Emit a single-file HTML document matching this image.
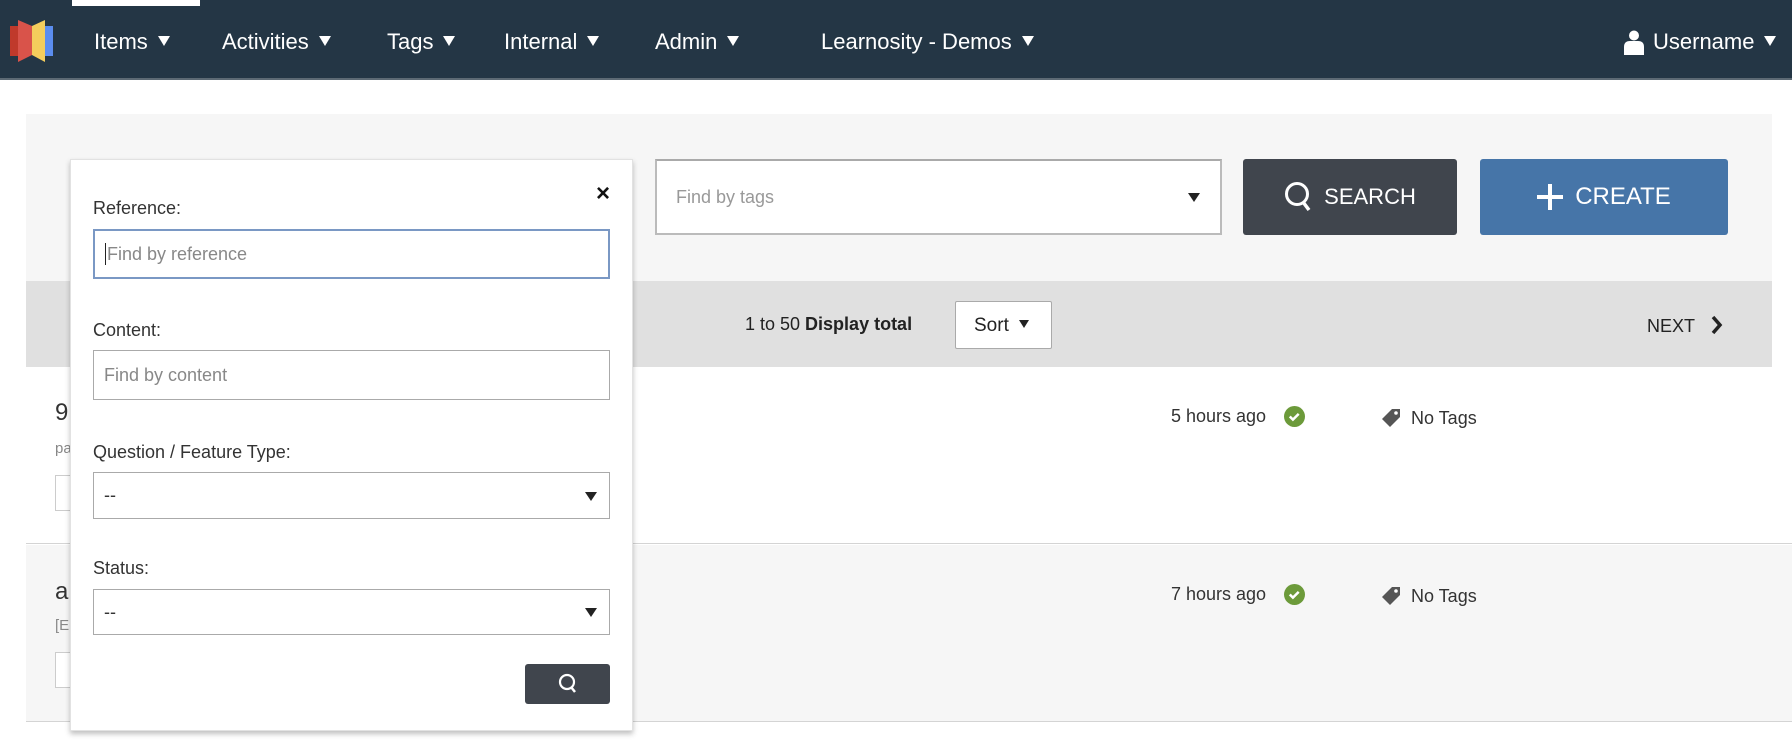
<!DOCTYPE html>
<html><head><meta charset="utf-8"><style>
*{box-sizing:border-box;margin:0;padding:0}
body{width:1792px;height:746px;position:relative;background:#fff;font-family:"Liberation Sans",sans-serif;overflow:hidden;color:#333}
.a{position:absolute}
.nav{left:0;top:0;width:1792px;height:80px;background:#243645;border-bottom:2px solid #5d6a74}
.ni{color:#fff;font-size:22px;top:29px;white-space:nowrap}
.tri{display:inline-block;width:0;height:0;border-left:6px solid transparent;border-right:6px solid transparent;border-top:10px solid currentColor;margin-left:10px;vertical-align:3px}
.lbl{font-size:18px;color:#333}
.inp{border:1px solid #aaa;background:#fff;font-size:18px;color:#888;padding-left:10px;display:flex;align-items:center}
.stri{position:absolute;right:12px;top:50%;margin-top:-4px;border-left:6px solid transparent;border-right:6px solid transparent;border-top:9px solid #222}
</style></head><body>
<div class="a nav"></div>
<div class="a" style="left:72px;top:0;width:128px;height:6px;background:#fff"></div>
<svg class="a" style="left:9px;top:19px" width="46" height="44" viewBox="0 0 46 44">
<rect x="1" y="7" width="9" height="30" fill="#c0392b"/>
<polygon points="9,1 23,7 23,36 9,43" fill="#d9534a"/>
<polygon points="23,7 36,1 36,43 23,36" fill="#f4cd5c"/>
<rect x="36" y="7" width="8" height="30" fill="#5b8def"/>
</svg>
<div class="a ni" style="left:94px">Items<span class="tri"></span></div>
<div class="a ni" style="left:222px">Activities<span class="tri"></span></div>
<div class="a ni" style="left:387px">Tags<span class="tri"></span></div>
<div class="a ni" style="left:504px">Internal<span class="tri"></span></div>
<div class="a ni" style="left:655px">Admin<span class="tri"></span></div>
<div class="a ni" style="left:821px">Learnosity - Demos<span class="tri"></span></div>
<svg class="a" style="left:1623px;top:30px" width="22" height="25" viewBox="0 0 22 25"><circle cx="11" cy="5.5" r="5" fill="#fff"/><path d="M1 25 V17 Q1 11 7 11 H15 Q21 11 21 17 V25Z" fill="#fff"/></svg>
<div class="a ni" style="left:1653px">Username<span class="tri"></span></div>

<div class="a" style="left:26px;top:114px;width:1746px;height:167px;background:#f6f6f6"></div>
<div class="a" style="left:26px;top:281px;width:1746px;height:86px;background:#e0e0e0"></div>
<div class="a" style="left:26px;top:367px;width:1766px;height:177px;background:#fff;border-bottom:1px solid #d4d4d4"></div>
<div class="a" style="left:26px;top:545px;width:1766px;height:177px;background:#f6f6f6;border-bottom:1px solid #d4d4d4"></div>

<div class="a inp" style="left:655px;top:159px;width:567px;height:76px;padding-left:19px;color:#999;border:2px solid #bbb;border-top-color:#aaa">Find by tags<span class="stri" style="right:20px"></span></div>
<div class="a" style="left:1243px;top:159px;width:214px;height:76px;background:#40454d;border-radius:3px;color:#fff;font-size:22px;display:flex;align-items:center;justify-content:center;gap:10px">
<svg width="30" height="32" viewBox="0 0 30 32"><circle cx="13" cy="13" r="10.5" fill="none" stroke="#fff" stroke-width="3"/><path d="M19 21 L25 29" stroke="#fff" stroke-width="3.5"/></svg>SEARCH</div>
<div class="a" style="left:1480px;top:159px;width:248px;height:76px;background:#4675a8;border-radius:3px;color:#fff;font-size:24px;display:flex;align-items:center;justify-content:center;gap:12px">
<svg width="26" height="26" viewBox="0 0 26 26"><path d="M13 0V26M0 13H26" stroke="#fff" stroke-width="4"/></svg>CREATE</div>

<div class="a" style="left:745px;top:314px;font-size:18px;color:#222">1 to 50 <b>Display total</b></div>
<div class="a" style="left:955px;top:301px;width:97px;height:48px;background:#fff;border:1px solid #aaa;border-radius:2px;font-size:19px;color:#222;padding:13px 0 0 18px">Sort<span class="tri" style="border-top-width:8px;border-left-width:5px;border-right-width:5px;vertical-align:3px"></span></div>
<div class="a" style="left:1647px;top:316px;font-size:18px;color:#222">NEXT</div>
<svg class="a" style="left:1711px;top:315px" width="12" height="20" viewBox="0 0 12 20"><path d="M2 2 L9 10 L2 18" fill="none" stroke="#222" stroke-width="3.5"/></svg>

<div class="a" style="left:55px;top:399px;font-size:24px;color:#333">9</div>
<div class="a" style="left:55px;top:440px;font-size:15px;color:#888">pa</div>
<div class="a" style="left:55px;top:475px;width:40px;height:36px;border:1px solid #ccc;background:#fff"></div>
<div class="a" style="left:55px;top:578px;font-size:24px;color:#333">a</div>
<div class="a" style="left:55px;top:617px;font-size:15px;color:#888">[E</div>
<div class="a" style="left:55px;top:652px;width:40px;height:36px;border:1px solid #ccc;background:#fff"></div>

<div class="a" style="left:1171px;top:406px;font-size:18px;color:#333">5 hours ago</div>
<svg class="a" style="left:1284px;top:406px" width="21" height="21" viewBox="0 0 20 20"><circle cx="10" cy="10" r="10" fill="#6c9a3a"/><path d="M5.5 10 L8.5 13 L14 7.5" fill="none" stroke="#fff" stroke-width="2.4"/></svg>
<svg class="a" style="left:1381px;top:408px" width="20" height="20" viewBox="0 0 20 20"><path d="M11 1 H19 V9 L9 19 L1 11Z" fill="#555"/><circle cx="15" cy="5" r="1.8" fill="#fff"/></svg>
<div class="a" style="left:1411px;top:408px;font-size:18px;color:#333">No Tags</div>
<div class="a" style="left:1171px;top:584px;font-size:18px;color:#333">7 hours ago</div>
<svg class="a" style="left:1284px;top:584px" width="21" height="21" viewBox="0 0 20 20"><circle cx="10" cy="10" r="10" fill="#6c9a3a"/><path d="M5.5 10 L8.5 13 L14 7.5" fill="none" stroke="#fff" stroke-width="2.4"/></svg>
<svg class="a" style="left:1381px;top:586px" width="20" height="20" viewBox="0 0 20 20"><path d="M11 1 H19 V9 L9 19 L1 11Z" fill="#555"/><circle cx="15" cy="5" r="1.8" fill="#fff"/></svg>
<div class="a" style="left:1411px;top:586px;font-size:18px;color:#333">No Tags</div>

<div class="a" style="left:70px;top:159px;width:563px;height:572px;background:#fff;border:1px solid #e2e2e2;box-shadow:0 3px 5px rgba(0,0,0,0.25)"></div>
<div class="a" style="left:596px;top:180px;font-size:24px;color:#111;font-weight:bold">×</div>
<div class="a lbl" style="left:93px;top:198px">Reference:</div>
<div class="a inp" style="left:93px;top:229px;width:517px;height:50px;border:2px solid #7a98c4"><span style="border-left:1px solid #222;height:22px;margin-right:1px"></span>Find by reference</div>
<div class="a lbl" style="left:93px;top:320px">Content:</div>
<div class="a inp" style="left:93px;top:350px;width:517px;height:50px">Find by content</div>
<div class="a lbl" style="left:93px;top:442px">Question / Feature Type:</div>
<div class="a inp" style="left:93px;top:472px;width:517px;height:47px;color:#333">--<span class="stri"></span></div>
<div class="a lbl" style="left:93px;top:558px">Status:</div>
<div class="a inp" style="left:93px;top:589px;width:517px;height:46px;color:#333">--<span class="stri"></span></div>
<div class="a" style="left:525px;top:664px;width:85px;height:40px;background:#40454d;border-radius:3px;display:flex;align-items:center;justify-content:center">
<svg width="20" height="22" viewBox="0 0 20 22"><circle cx="9" cy="9" r="7" fill="none" stroke="#fff" stroke-width="2.2"/><path d="M13 14 L17 19" stroke="#fff" stroke-width="2.5"/></svg></div>
</body></html>
